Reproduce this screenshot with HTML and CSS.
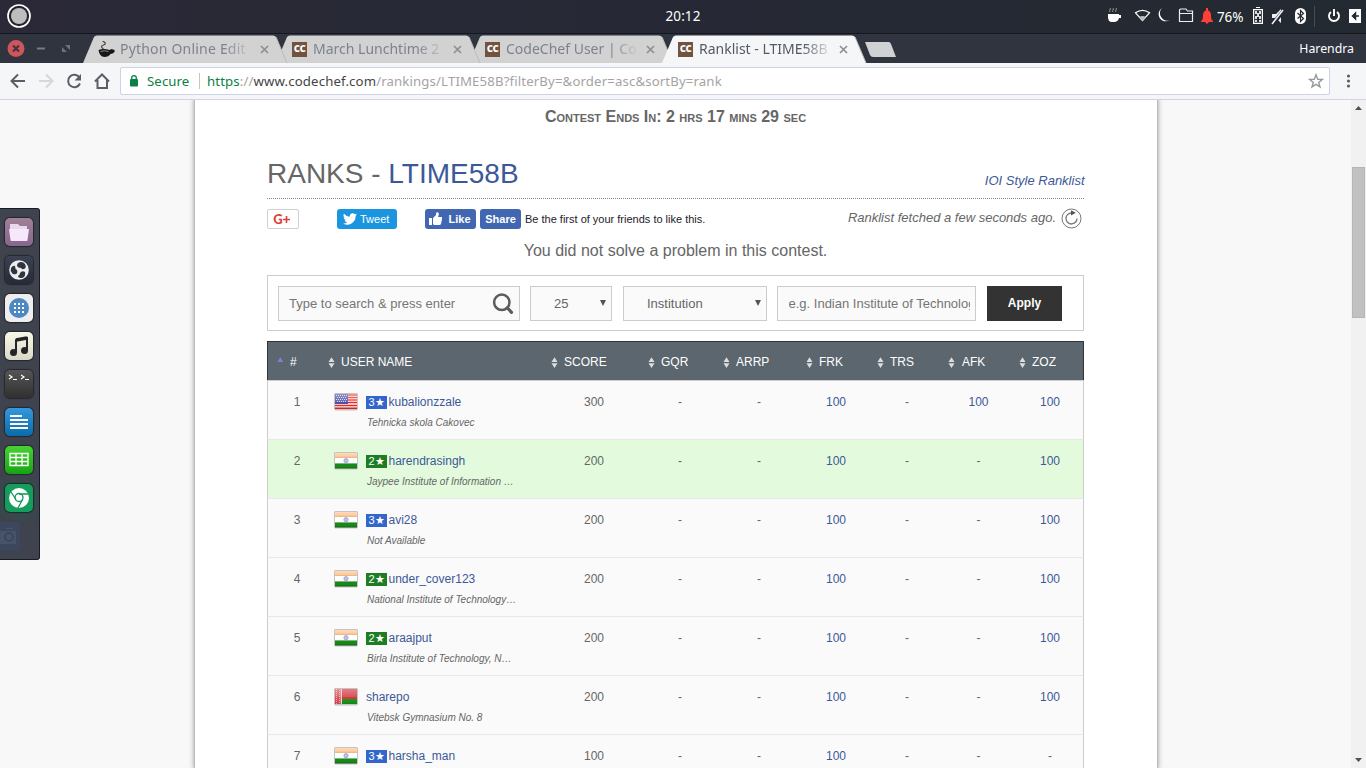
FILE: index.html
```html
<!DOCTYPE html>
<html lang="en">
<head>
<meta charset="utf-8">
<title>Ranklist - LTIME58B</title>
<link rel="stylesheet" href="styles.css">
</head>
<body>
<svg class="defs" width="0" height="0">
  <defs>
    <linearGradient id="gloss" x1="0" y1="0" x2="0" y2="1"><stop offset="0" stop-color="#fff" stop-opacity=".35"/><stop offset=".5" stop-color="#fff" stop-opacity=".15"/><stop offset=".55" stop-color="#fff" stop-opacity="0"/><stop offset="1" stop-color="#000" stop-opacity=".12"/></linearGradient>
    <symbol id="sort" viewBox="0 0 7 11"><path d="M.5 5L3.5.2 6.500 5zM.5 6.200h6L3.500 11z" fill="#ddd"/></symbol>
    <symbol id="tabshape" viewBox="0 0 205 28"><path d="M0 28L11 2Q12 .5 14 .5H190Q192 .5 193 2L204 28z" fill="currentColor"/><path d="M193 2L204 28" stroke="#bbb" fill="none"/></symbol>
    <symbol id="cross" viewBox="0 0 9 9"><path d="M1 1l7 7M8 1L1 8" stroke="#8d8f97" stroke-width="1.7"/></symbol>
    <symbol id="in" viewBox="0 0 24 18"><path d="M1 0h22l1 1v15l-1 1.500H1L0 16V1z" fill="#c4c4c4"/><path d="M1 1h22v5H1z" fill="#ffc795"/><path d="M1 6h22v5.500H1z" fill="#fff"/><path d="M1 11.500h22V16H1z" fill="#168a16"/><circle cx="12" cy="8.700" r="2.100" fill="#bfc3e6" stroke="#a1a6d6"/><path d="M1 1h22v5H1z" fill="url(#gloss)"/><path d="M1 16h22" stroke="#196119"/></symbol>
    <symbol id="us" viewBox="0 0 24 18"><path d="M1 0h22l1 1v15l-1 1.500H1L0 16V1z" fill="#c4c4c4"/><path d="M1 1h22v15H1z" fill="#fff"/><path d="M1 2h22M1 4.500h22M1 7h22M1 9.500h22M1 12.500h22M1 15.300h22" stroke="#e22" stroke-width="1.400"/><path d="M1 1h13v10H1z" fill="#4a50a8"/><path d="M2 2.500h11M3 4.500h10M2 6.500h11M3 8.500h10" stroke="#d9dbf5" stroke-dasharray="1 1"/><path d="M1 1h22v15H1z" fill="url(#gloss)"/></symbol>
    <symbol id="by" viewBox="0 0 24 18"><path d="M1 0h22l1 1v15l-1 1.500H1L0 16V1z" fill="#c4c4c4"/><path d="M1 1h22v10H1z" fill="#d2383f"/><path d="M8 11h15v5H8z" fill="#159315"/><path d="M1 1h6v15H1z" fill="#e04a50"/><path d="M2.500 1v15M5.500 2v14" stroke="#f5b1b4" stroke-dasharray="1 1"/><path d="M7.300 1v15" stroke="#eee"/><path d="M1 1h22v15H1z" fill="url(#gloss)"/></symbol>
  </defs>
</svg>

<header class="topbar">
  <svg class="launcher-button" width="26" height="26" viewBox="0 0 26 26"><circle cx="13" cy="13" r="11" fill="#24242f" stroke="#fff" stroke-width="1.700"/><circle cx="13" cy="13" r="8" fill="#bdbdbd"/></svg>
  <span class="clock">20:12</span>
  <div class="tray">
    <svg class="tray-icons" width="108" height="24" viewBox="0 0 108 24" fill="none">
      <path d="M2 10h11v1h2v3h-2q-1 4-5 4H6q-4 0-4-5z" fill="#fff"/><path d="M4 4q1 1 0 2t0 2M7 4q1 1 0 2t0 2M10 4q1 1 0 2t0 2" stroke="#aaa" stroke-width=".8"/>
      <path d="M29.500 8.800Q36.500 3.800 43.500 8.800L36.500 16.500z" stroke="#fff" stroke-width="1.200"/><path d="M33 13q3.500-2 7 0l-3.500 4z" fill="#bbb"/>
      <path d="M56 4A7 7 0 1 0 63.500 16.300 7.500 7.500 0 0 1 56 4z" fill="#fff"/>
      <path d="M73.500 17.500V6q0-1 1-1H80l1.500 2h5v10.500zM73.500 9.500h13" stroke="#eee" stroke-width="1.200"/>
      <path d="M95 17q2-1 2-5 0-5 3-5.500V4h2v2.500q3 .5 3 5.500 0 4 2 5v1H95zM99 18h4l-2 2z" fill="#ff4038"/>
    </svg>
    <span class="battery-text">76%</span>
    <svg width="116" height="28" viewBox="0 0 116 28" fill="none">
      <path d="M3.600 7.600h8.800v13.800H3.600zM6 5.500h4" stroke="#fff" stroke-width="1.200"/><path d="M5 9h2v2h2V9h2v3H9v2h2v3H9v-2H7v2H5v-3h2v-2H5zm0 9h2v2H5zm4 0h2v2H9z" fill="#ddd"/>
      <path d="M22 12h4l5-5v14l-5-5h-4z" fill="#eee"/><path d="M22 23L35 7" stroke="#252833" stroke-width="4"/><path d="M22 22L33 8" stroke="#eee" stroke-width="1.600"/>
      <rect x="45" y="6" width="11" height="16" rx="5.500" fill="#fff"/><path d="M47.500 11l6 5.500-3 3V8.500l3 3-6 5" stroke="#252a33" stroke-width="1.200"/>
      <path d="M64.500 4v21" stroke="#464b55"/>
      <path d="M81 10a5 5 0 1 0 6 0M84 7v7" stroke="#fff" stroke-width="1.900"/>
      <path d="M99 7h12v14H99z" fill="#fff"/><path d="M109 14h-6M105.500 11l-3 3 3 3z" fill="#242a31" stroke="#242a31" stroke-width="1.500"/>
    </svg>
  </div>
</header>

<div class="tabstrip">
  <svg class="window-buttons" width="83" height="29" viewBox="0 0 83 29"><circle cx="16" cy="14.500" r="8.500" fill="#cf555c"/><path d="M13 11.500l6 6M19 11.500l-6 6" stroke="#3b343c" stroke-width="2"/><path d="M37 14.500h8" stroke="#757b84" stroke-width="2"/><path d="M65 11h5v5zM62 13v5h5z" fill="#6d737e"/></svg>
  <div class="tab t1"><svg class="shape" width="205" height="28"><use href="#tabshape"/></svg>
    <svg class="favicon" width="17" height="17" viewBox="0 0 17 17"><path d="M0 9q5-2 11 0l2-1 3 1q1 3-4 4-2 3-6 3-5 0-6-7z" fill="#181818"/><path d="M2 10.500q4-1.500 8 0" stroke="#888" fill="none"/><path d="M5 8Q1 5.500 5 4T4 0" stroke="#444" fill="none" stroke-width="1.200"/></svg>
    <span class="tab-title">Python Online Edit</span><svg class="close" width="9" height="9"><use href="#cross"/></svg></div>
  <div class="tab t2"><svg class="shape" width="205" height="28"><use href="#tabshape"/></svg><span class="cc">cc</span><span class="tab-title">March Lunchtime 2</span><svg class="close" width="9" height="9"><use href="#cross"/></svg></div>
  <div class="tab t3"><svg class="shape" width="205" height="28"><use href="#tabshape"/></svg><span class="cc">cc</span><span class="tab-title">CodeChef User | Co</span><svg class="close" width="9" height="9"><use href="#cross"/></svg></div>
  <div class="tab active"><svg class="shape" width="205" height="28"><use href="#tabshape"/></svg><span class="cc">cc</span><span class="tab-title">Ranklist - LTIME58B</span><svg class="close" width="9" height="9"><use href="#cross"/></svg></div>
  <svg class="newtab" width="34" height="29" viewBox="0 0 34 29"><path d="M1 8h24q1 0 2 2l5 13H9q-2 0-3-2z" fill="#d0d1d2"/></svg>
  <span class="profile">Harendra</span>
</div>

<div class="toolbar">
  <svg class="nav" width="120" height="36" viewBox="0 0 120 36" fill="none" stroke="#5a5e68" stroke-width="2">
    <path d="M25 18H12.500M18 11.500L11.500 18l6.500 6.500"/><path d="M39 18h12.500M46 11.500l6.500 6.500-6.500 6.500" stroke="#d5d7da"/>
    <path d="M79.500 14.500A6.200 6.200 0 1 0 80 20.500"/><path d="M81 11v6.500h-6.500z" fill="#5a5e68" stroke="none"/>
    <path d="M95 18.500l7-7 7 7M97.500 17v8h9.500v-8"/>
  </svg>
  <div class="omnibox">
    <svg width="10" height="12" viewBox="0 0 10 12"><rect x="0" y="4" width="8" height="7.500" rx="1" fill="#0b8043"/><path d="M1.700 5V3a2.300 2.300 0 0 1 4.600 0v2" fill="none" stroke="#0b8043" stroke-width="1.300"/></svg>
    <span class="secure">Secure</span><span class="divider"></span>
    <span class="url"><span class="scheme">https</span><span class="dim">://</span>www.codechef.com<span class="dim">/rankings/LTIME58B?filterBy=&amp;order=asc&amp;sortBy=rank</span></span>
    <svg class="star" width="16" height="16" viewBox="0 0 16 16"><path d="M8 1.800l1.700 4.400 4.700.2-3.700 3 1.300 4.500L8 11.300l-4 2.600 1.300-4.500-3.700-3 4.700-.2z" fill="none" stroke="#96989f" stroke-width="1.400"/></svg>
  </div>
  <svg class="menu" width="5" height="16" viewBox="0 0 5 16" fill="#5a5e68"><circle cx="2.500" cy="3" r="1.600"/><circle cx="2.500" cy="8" r="1.600"/><circle cx="2.500" cy="13" r="1.600"/></svg>
</div>

<main class="viewport">
  <section class="page">
    <div class="countdown">Contest Ends In: 2 hrs 17 mins 29 sec</div>
    <div class="heading"><h1>RANKS - <a>LTIME58B</a></h1><a class="ioi">IOI Style Ranklist</a></div>
    <div class="social">
      <span class="gplus"><b>G</b><svg width="7" height="7"><path d="M0 3.500h7M3.500 0v7" stroke="#db4437" stroke-width="1.600"/></svg></span>
      <span class="tweet"><svg width="14" height="12" viewBox="0 0 24 20"><path d="M24 2.400a10 10 0 0 1-2.800.8A5 5 0 0 0 23.300.5a10 10 0 0 1-3.100 1.200 4.900 4.900 0 0 0-8.400 4.500A14 14 0 0 1 1.700 1a4.900 4.900 0 0 0 1.500 6.600A5 5 0 0 1 1 7a4.900 4.900 0 0 0 3.900 4.900 5 5 0 0 1-2.200.1 4.900 4.900 0 0 0 4.600 3.400A10 10 0 0 1 0 17.500 14 14 0 0 0 21.500 5z" fill="#fff"/></svg>Tweet</span>
      <span class="fb like"><svg width="14" height="14" viewBox="0 0 14 14"><path d="M0 6h3v7H0zM4 6l3-3V1q2-2 3 1L9 5h4v2l-1 5-1 1H5l-1-1z" fill="#fff"/></svg>Like</span><span class="fb share">Share</span>
      <span class="friends">Be the first of your friends to like this.</span>
      <span class="fetched">Ranklist fetched a few seconds ago.</span>
      <svg class="refresh" width="21" height="21" viewBox="0 0 21 21" fill="none" stroke="#777"><circle cx="10.500" cy="10.500" r="9.500"/><path d="M16 10.500A5.500 5.500 0 1 1 10 5" stroke-width="1.300"/><path d="M10 2.300l4.800 2.400L10 7.500z" fill="#555" stroke="none"/></svg>
    </div>
    <p class="notice">You did not solve a problem in this contest.</p>
    <div class="filters">
      <div class="field search">Type to search &amp; press enter<svg width="22" height="22" viewBox="0 0 22 22" fill="none" stroke="#5c5c5c"><circle cx="9.800" cy="9.300" r="7.700" stroke-width="2.500"/><path d="M15.500 15l4 4.300" stroke-width="3.200" stroke-linecap="round"/></svg></div>
      <div class="field count">25<i></i></div>
      <div class="field kind">Institution<i></i></div>
      <div class="field institute"><span>e.g. Indian Institute of Technology</span></div>
      <div class="apply">Apply</div>
    </div>
    <div class="table">
      <div class="thead">
        <div><svg width="7" height="11"><path d="M.500 5L3.300 0 6.200 5z" fill="#7d80d8"/></svg>#</div><div><svg width="7" height="11"><use href="#sort"/></svg>USER NAME</div><div><svg width="7" height="11"><use href="#sort"/></svg>SCORE</div><div><svg width="7" height="11"><use href="#sort"/></svg>GQR</div><div><svg width="7" height="11"><use href="#sort"/></svg>ARRP</div><div><svg width="7" height="11"><use href="#sort"/></svg>FRK</div><div><svg width="7" height="11"><use href="#sort"/></svg>TRS</div><div class="afk"><svg width="7" height="11"><use href="#sort"/></svg>AFK</div><div><svg width="7" height="11"><use href="#sort"/></svg>ZOZ</div>
      </div>
      <div class="row"><span>1</span><div class="user"><svg class="flag" width="24" height="18"><use href="#us"/></svg><div><div class="name"><span class="badge s3">3★</span><a>kubalionzzale</a></div><em>Tehnicka skola Cakovec</em></div></div><span>300</span><span>-</span><span>-</span><a>100</a><span>-</span><a>100</a><a>100</a></div>
      <div class="row me"><span>2</span><div class="user"><svg class="flag" width="24" height="18"><use href="#in"/></svg><div><div class="name"><span class="badge s2">2★</span><a>harendrasingh</a></div><em>Jaypee Institute of Information …</em></div></div><span>200</span><span>-</span><span>-</span><a>100</a><span>-</span><span>-</span><a>100</a></div>
      <div class="row"><span>3</span><div class="user"><svg class="flag" width="24" height="18"><use href="#in"/></svg><div><div class="name"><span class="badge s3">3★</span><a>avi28</a></div><em>Not Available</em></div></div><span>200</span><span>-</span><span>-</span><a>100</a><span>-</span><span>-</span><a>100</a></div>
      <div class="row"><span>4</span><div class="user"><svg class="flag" width="24" height="18"><use href="#in"/></svg><div><div class="name"><span class="badge s2">2★</span><a>under_cover123</a></div><em>National Institute of Technology…</em></div></div><span>200</span><span>-</span><span>-</span><a>100</a><span>-</span><span>-</span><a>100</a></div>
      <div class="row"><span>5</span><div class="user"><svg class="flag" width="24" height="18"><use href="#in"/></svg><div><div class="name"><span class="badge s2">2★</span><a>araajput</a></div><em>Birla Institute of Technology, N…</em></div></div><span>200</span><span>-</span><span>-</span><a>100</a><span>-</span><span>-</span><a>100</a></div>
      <div class="row"><span>6</span><div class="user"><svg class="flag" width="24" height="18"><use href="#by"/></svg><div><div class="name"><a>sharepo</a></div><em>Vitebsk Gymnasium No. 8</em></div></div><span>200</span><span>-</span><span>-</span><a>100</a><span>-</span><span>-</span><a>100</a></div>
      <div class="row"><span>7</span><div class="user"><svg class="flag" width="24" height="18"><use href="#in"/></svg><div><div class="name"><span class="badge s3">3★</span><a>harsha_man</a></div></div></div><span>100</span><span>-</span><span>-</span><a>100</a><span>-</span><span>-</span><span>-</span></div>
    </div>
  </section>
  <div class="scrollbar"><svg width="15" height="15"><path d="M4 10L7.500 6 11 10z" fill="#505050"/></svg><div class="thumb"></div><svg width="15" height="15"><path d="M4 5h7L7.500 9z" fill="#505050"/></svg></div>
</main>

<aside class="dock">
  <svg class="app files" viewBox="0 0 28 28"><path d="M5 6h8l2 2h7v6H5z" fill="#e9d9ec"/><path d="M4 11h20l-1.500 11q0 1-1 1h-15q-1 0-1-1z" fill="#f6e7fb"/></svg>
  <svg class="app obs" viewBox="0 0 28 28"><circle cx="14" cy="14" r="9.800" fill="#ededed"/><g fill="#2f3441"><path d="M13 7q3-2 6 0 3 3 1 5.500-3 1.500-4-.5-3 0-4-2 0-2 1-3z"/><path d="M6 12q2-3 4-2 0 3 2 4 1 3-1 4-3 1-4-1-2-2-1-5z"/><path d="M20 16q1 5-3 6-4 0-4-2 2-1 2-3 2-3 5-1z"/></g></svg>
  <svg class="app grid-app" viewBox="0 0 28 28"><circle cx="14" cy="14" r="10" fill="#4d88c3"/><path d="M9 10h2m2 0h2m2 0h2M9 14h2m2 0h2m2 0h2M9 18h2m2 0h2m2 0h2" stroke="#fff" stroke-width="2"/></svg>
  <svg class="app music" viewBox="0 0 28 28"><path d="M11 20V8l11-2v12" fill="none" stroke="#252525" stroke-width="2"/><path d="M11 8l11-2" stroke="#252525" stroke-width="3.500"/><circle cx="8.500" cy="20.500" r="3.500" fill="#252525"/><circle cx="19.500" cy="18.500" r="3.500" fill="#252525"/></svg>
  <svg class="app term" viewBox="0 0 28 28" fill="none" stroke="#fff" stroke-width="1.200"><path d="M4 5l3 2-3 2M8 9.500h4M16 5l3 2-3 2M20 9.500h4"/></svg>
  <svg class="app docs" viewBox="0 0 28 28"><path d="M5 8h12M5 12h18M5 16h18M5 20h18" stroke="#fff" stroke-width="2"/></svg>
  <svg class="app sheet" viewBox="0 0 28 28"><path d="M5 7.500h18v12H5zM5 11.500h18M5 15.500h18M11 7v13M17 7v13" fill="none" stroke="#fff" stroke-width="1.300"/></svg>
  <svg class="app chrome" viewBox="0 0 28 28"><circle cx="14" cy="14" r="10" fill="#fff"/><circle cx="14" cy="13.500" r="4" fill="#fff" stroke="#109757" stroke-width="1.300"/><path d="M14 10h9M11 15.500L6 8M17.500 15.500L13 24" stroke="#109757" stroke-width="1.300"/></svg>
  <svg class="ghost" width="20" height="29" viewBox="0 0 20 29"><path d="M0 0h16q4 0 4 4v21q0 4-4 4H0z" fill="#3c4962"/><path d="M0 9h16v13H0zM6 6h7v1H6z" fill="#4a5870"/><circle cx="9" cy="15" r="4" fill="none" stroke="#36425a" stroke-width="1.500"/></svg>
</aside>
</body>
</html>
```

FILE: styles.css
```css
* { box-sizing: border-box; }
body { margin: 0; width: 1366px; height: 768px; overflow: hidden; display: flex; flex-direction: column; background: #f8f8f8; font-family: "Liberation Sans", Arial, sans-serif; color: #666; }
svg { display: block; flex: none; }
.defs { position: absolute; }
a { color: #3b5998; }

.topbar { height: 34px; flex: none; display: grid; grid-template-columns: 1fr auto 1fr; align-items: center; background: linear-gradient(90deg, #2b2937, #262935 50%, #242a31); border-bottom: 1px solid #15161f; color: #fff; font-family: "Noto Sans", sans-serif; font-size: 13.500px; padding-bottom: 1px; }
.launcher-button { margin-left: 6px; }
.clock { letter-spacing: .1px; }
.tray { display: flex; align-items: center; justify-content: flex-end; }
.tray-icons { margin-right: 3px; }
.battery-text { width: 33px; letter-spacing: -.1px; padding-top: 1px; }

.tabstrip { height: 29px; flex: none; display: flex; background: #2f343f; position: relative; font-family: "Noto Sans", sans-serif; }
.tab { position: relative; width: 204px; margin-right: -11px; padding: 1px 0 0 16px; display: flex; align-items: center; flex: none; color: #d2d2d2; }
.t1 { z-index: 3; } .t2 { z-index: 2; } .t3 { z-index: 1; }
.active { z-index: 5; color: #f5f6f7; }
.shape { position: absolute; left: 0; top: 1px; z-index: -1; }
.favicon { margin-right: 4px; margin-left: -1px; width: 18px; }
.cc { width: 15px; height: 15px; margin-right: 6px; background: #725340; color: #fff; font: bold 12px/12px "Noto Sans", sans-serif; text-align: center; letter-spacing: -.5px; }
.tab-title { width: 134px; overflow: hidden; white-space: nowrap; color: #7d828e; font-size: 14px; line-height: 24px; -webkit-mask-image: linear-gradient(90deg, #000 104px, transparent 134px); mask-image: linear-gradient(90deg, #000 104px, transparent 134px); }
.t1 .tab-title { letter-spacing: .2px; }
.active .tab-title { color: #535966; }
.close { margin-left: 6px; }
.newtab { margin-left: 9px; }
.profile { margin: 5px 12px 0 auto; color: #fff; font-size: 12.300px; line-height: 19px; }

.toolbar { height: 37px; flex: none; display: flex; align-items: center; background: #f5f6f7; border-bottom: 1px solid #cfd2e8; }
.omnibox { width: 1210px; height: 28px; display: flex; align-items: center; padding: 0 5px 0 9px; background: #fff; border: 1px solid #ced2e8; border-radius: 2px; font-family: "Noto Sans", sans-serif; font-size: 13.200px; }
.secure { color: #0b8043; margin-left: 7px; width: 43px; letter-spacing: .1px; }
.divider { width: 1px; height: 16px; background: #c4c4c4; margin: 0 7px 0 9px; }
.url { color: #444; white-space: nowrap; letter-spacing: .14px; }
.scheme { color: #0b8043; }
.dim { color: #a4a4a4; }
.star { margin-left: auto; }
.menu { margin-left: 16px; }

.viewport { flex: 1; min-height: 0; display: flex; padding-left: 195px; }
.page { width: 962px; flex: none; background: #fff; box-shadow: 0 0 0 1px #bbb, 0 0 5px 1px #999; padding: 0 73px 0 72px; clip-path: inset(0 -8px 0 -8px); }
.countdown { height: 33px; line-height: 34px; text-align: center; font-size: 16px; font-weight: bold; font-variant: small-caps; }
.heading { height: 66px; border-bottom: 1px dotted #888; display: flex; justify-content: space-between; }
h1 { margin: 24px 0 0; font-size: 28px; line-height: 34px; font-weight: normal; }
.ioi { margin-top: 40px; margin-right: -.5px; font-size: 13px; line-height: 16px; font-style: italic; white-space: nowrap; }
.social { display: flex; height: 31px; padding-top: 10px; align-items: flex-start; font-size: 11px; line-height: 20px; white-space: nowrap; }
.gplus { width: 32px; height: 20px; border: 1px solid #d0d0d0; border-radius: 2px; display: flex; align-items: center; justify-content: center; color: #db4437; padding-right: 3px; }
.gplus b { font: 900 13px Lato, sans-serif; }
.tweet { width: 60px; height: 20px; margin-left: 38px; padding-left: 6px; display: flex; align-items: center; gap: 3px; background: #1b95e0; color: #fff; border-radius: 3px; }
.fb { height: 20px; display: flex; align-items: center; justify-content: center; background: #4267b2; color: #fff; border-radius: 3px; font-weight: bold; }
.like { width: 51px; margin-left: 28px; gap: 5px; padding-right: 1px; }
.share { width: 41px; margin-left: 4px; }
.friends { margin-left: 4px; color: #1d2129; font-size: 11px; }
.fetched { margin-left: auto; font-size: 13px; font-style: italic; line-height: 17px; }
.refresh { margin: -1px 2.500px 0 4.500px; }
.notice { margin: 0; height: 45px; line-height: 41px; font-size: 16px; text-align: center; }
.filters { height: 56px; padding: 10px; display: flex; border: 1px solid #ccc; }
.field { height: 35px; background: #fafafa; border: 1px solid #ccc; display: flex; align-items: center; font-size: 13px; color: #757575; overflow: hidden; white-space: nowrap; }
.search { width: 242px; padding: 0 5px 0 10px; justify-content: space-between; }
.count { width: 82px; margin-left: 10px; padding-left: 23px; color: #666; }
.kind { width: 144px; margin-left: 11px; padding-left: 23px; color: #666; }
.field i { margin: -2px 5px 0 auto; border: 3px solid transparent; border-top: 6px solid #555; border-bottom: 0; }
.institute { width: 199px; margin-left: 10px; padding: 0 5px 0 10.500px; }
.institute span { overflow: hidden; }
.apply { width: 75px; height: 35px; margin-left: 11px; background: #333; color: #fff; font-size: 12px; font-weight: bold; line-height: 35px; text-align: center; }

.table { margin-top: 10px; }
.thead, .row { display: grid; grid-template-columns: 51px 223px 97px 75px 83px 71px 71px 71px 1fr; }
.thead { height: 39px; background: #5b666e; border: 1px solid #2e363a; border-bottom: 0; color: #fff; font-size: 12px; line-height: 40px; }
.thead div { display: flex; align-items: center; gap: 6px; padding-left: 9px; white-space: nowrap; }
.thead .afk { gap: 7px; }
.thead svg { margin-top: 1px; }
.row { height: 59px; background: #fafafa; border: 1px solid #ccc; border-top: 0; border-bottom-color: #e8e8e8; font-size: 12px; line-height: 14px; }
.thead + .row { border-top: 1px solid #ccc; height: 60px; }
.row > span, .row > a { text-align: center; padding: 14px 0 0 7px; }
.row > :nth-child(8) { padding-left: 8px; }
.me { background: #e3fbdc; }
.user { display: flex; padding: 12px 0 0 15px; gap: 8px; }
.user > div { padding-top: 2px; }
.name { display: flex; gap: 1.500px; height: 14px; }
.badge { width: 21px; height: 13px; margin-top: 1px; color: #fff; font-size: 11px; line-height: 13px; text-align: center; }
.s3 { background: #3366cc; } .s2 { background: #1e7d22; }
.row em { display: block; margin: 8px 0 0 1px; font-size: 10px; line-height: 12px; white-space: nowrap; }

.scrollbar { width: 15px; margin-left: auto; background: #f1f1f1; display: flex; flex-direction: column; }
.scrollbar svg:last-child { margin-top: auto; }
.thumb { height: 151px; margin: 52px 1px 0; background: #c1c1c1; border: 1px solid #b5b5b5; }

.dock { position: absolute; left: 0; top: 208px; width: 40px; height: 352px; overflow: hidden; background: #3f434e; border: 1px solid #181b28; border-left: 0; border-radius: 0 3px 3px 0; padding: 9px 0 0 5px; display: flex; flex-direction: column; gap: 10px; }
.app { width: 28px; height: 28px; border-radius: 5px; box-shadow: 0 0 1px 1px #24272f; }
.files { background: linear-gradient(#a18098, #86668c); }
.obs { background: linear-gradient(#3c4252, #252a36); }
.grid-app { background: #eee; }
.music { background: linear-gradient(#f8f8e9, #d9d9c9); }
.term { background: linear-gradient(#555, #303030); }
.docs { background: linear-gradient(#3598dc, #086baa); }
.sheet { background: linear-gradient(#47d332, #17a413); }
.chrome { background: #159d5e; box-shadow: 0 0 1px 1px #24272f, 0 0 8px 3px #2f5149; }
.ghost { margin-left: -5px; opacity: .8; }
```
